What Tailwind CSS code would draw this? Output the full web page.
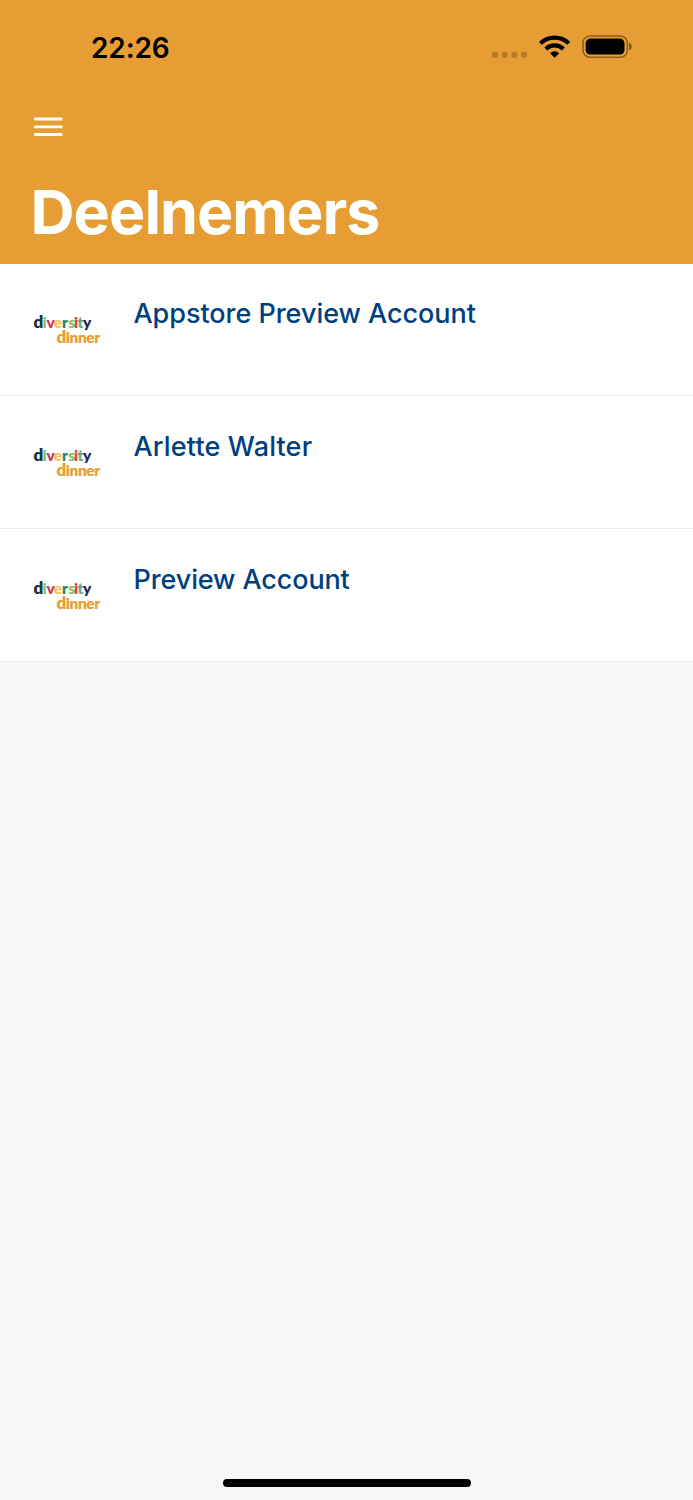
<!DOCTYPE html>
<html lang="nl">
<head>
<meta charset="utf-8">
<title>Deelnemers</title>
<script src="https://cdn.jsdelivr.net/npm/@tailwindcss/browser@4"></script>
</head>
<body class="flex h-[1500px] w-[693px] flex-col overflow-hidden bg-[#f7f7f7] font-['Inter',sans-serif]">
<svg class="hidden">
  <symbol id="logo" viewBox="0 0 80 48">
    <g font-family="Lato, sans-serif" font-weight="800" font-size="15.5">
      <text y="21.8" x="6.6 15.4 19.4 26.8 34.9 41.2 47 50.6 56"><tspan fill="#12343b" font-size="17">d</tspan><tspan fill="#8cc06d">i</tspan><tspan fill="#cf3a62">v</tspan><tspan fill="#f5c35c">e</tspan><tspan fill="#27856f">r</tspan><tspan fill="#8cc06d">s</tspan><tspan fill="#d9453d">i</tspan><tspan fill="#6fa58b">t</tspan><tspan fill="#1f2a52">y</tspan></text>
      <text y="37.2" x="29.4 38.7 42.5 51 59.2 67.2" fill="#e89e35"><tspan font-size="17">d</tspan>inner</text>
    </g>
  </symbol>
</svg>
<header class="flex h-[264px] shrink-0 flex-col bg-[#e69e34]">
  <div class="flex h-[94px] items-center justify-between pr-[60px] pl-[91px]">
    <span class="mt-[2px] text-[28px] leading-none font-semibold tracking-[-0.1px] text-black">22:26</span>
    <svg class="h-[30px] w-[142px]" viewBox="491 32 142 30">
      <g fill="#000" fill-opacity=".22"><rect x="492" y="51.7" width="6" height="6" rx="2"/><rect x="501.7" y="51.7" width="6" height="6" rx="2"/><rect x="511.3" y="51.7" width="6" height="6" rx="2"/><rect x="521" y="51.7" width="6" height="6" rx="2"/></g>
      <g fill="none" stroke="#000" stroke-width="4.1"><path d="M540.4 43.4a20.4 20.4 0 0 1 28.4 0"/><path d="M545.8 49a12.6 12.6 0 0 1 17.6 0"/></g>
      <path d="M550 53.2a6.6 6.6 0 0 1 9.2 0L554.6 57.8Z"/>
      <rect x="583" y="36" width="44.3" height="21.2" rx="6.8" fill="none" stroke="#000" stroke-opacity=".4" stroke-width="1.6"/>
      <rect x="585.7" y="38.6" width="38.8" height="16" rx="4.6"/>
      <path d="M629 42.8c3.8 1.2 3.8 6.4 0 7.6Z" fill-opacity=".45"/>
    </svg>
  </div>
  <button class="mt-[23px] ml-[34px] w-[29px]" aria-label="Menu">
    <svg class="block h-[19px] w-[29px]" viewBox="0 0 29 19" fill="#fff"><path d="M.2 .6h28.2v2.8H.2zM.2 8.4h28.2v2.8H.2zM.2 16.1h28.2v2.8H.2z"/></svg>
  </button>
  <h1 class="mt-[45.5px] ml-[30.5px] text-[61px] leading-[60px] font-bold tracking-[-0.95px] text-white">Deelnemers</h1>
</header>
<main>
  <div class="flex h-[132px] items-start border-b border-[#ebebeb] bg-white pl-[27px]">
    <svg class="mt-[42px] h-[48px] w-[80px]"><use href="#logo"/></svg>
    <span class="mt-[34px] ml-[26.5px] text-[27px] leading-[32px] font-medium tracking-[-0.04px] text-[#003f7d]">Appstore Preview Account</span>
  </div>
  <div class="flex h-[133px] items-start border-b border-[#ebebeb] bg-white pl-[27px]">
    <svg class="mt-[43px] h-[48px] w-[80px]"><use href="#logo"/></svg>
    <span class="mt-[35px] ml-[26.5px] text-[27px] leading-[32px] font-medium tracking-[0.16px] text-[#003f7d]">Arlette Walter</span>
  </div>
  <div class="flex h-[133px] items-start border-b border-[#ebebeb] bg-white pl-[27px]">
    <svg class="mt-[43px] h-[48px] w-[80px]"><use href="#logo"/></svg>
    <span class="mt-[35px] ml-[26.5px] text-[27px] leading-[32px] font-medium tracking-[-0.12px] text-[#003f7d]">Preview Account</span>
  </div>
</main>
<div class="mt-auto mb-[13px] h-[8px] w-[248px] self-center rounded-full bg-black"></div>
</body>
</html>
